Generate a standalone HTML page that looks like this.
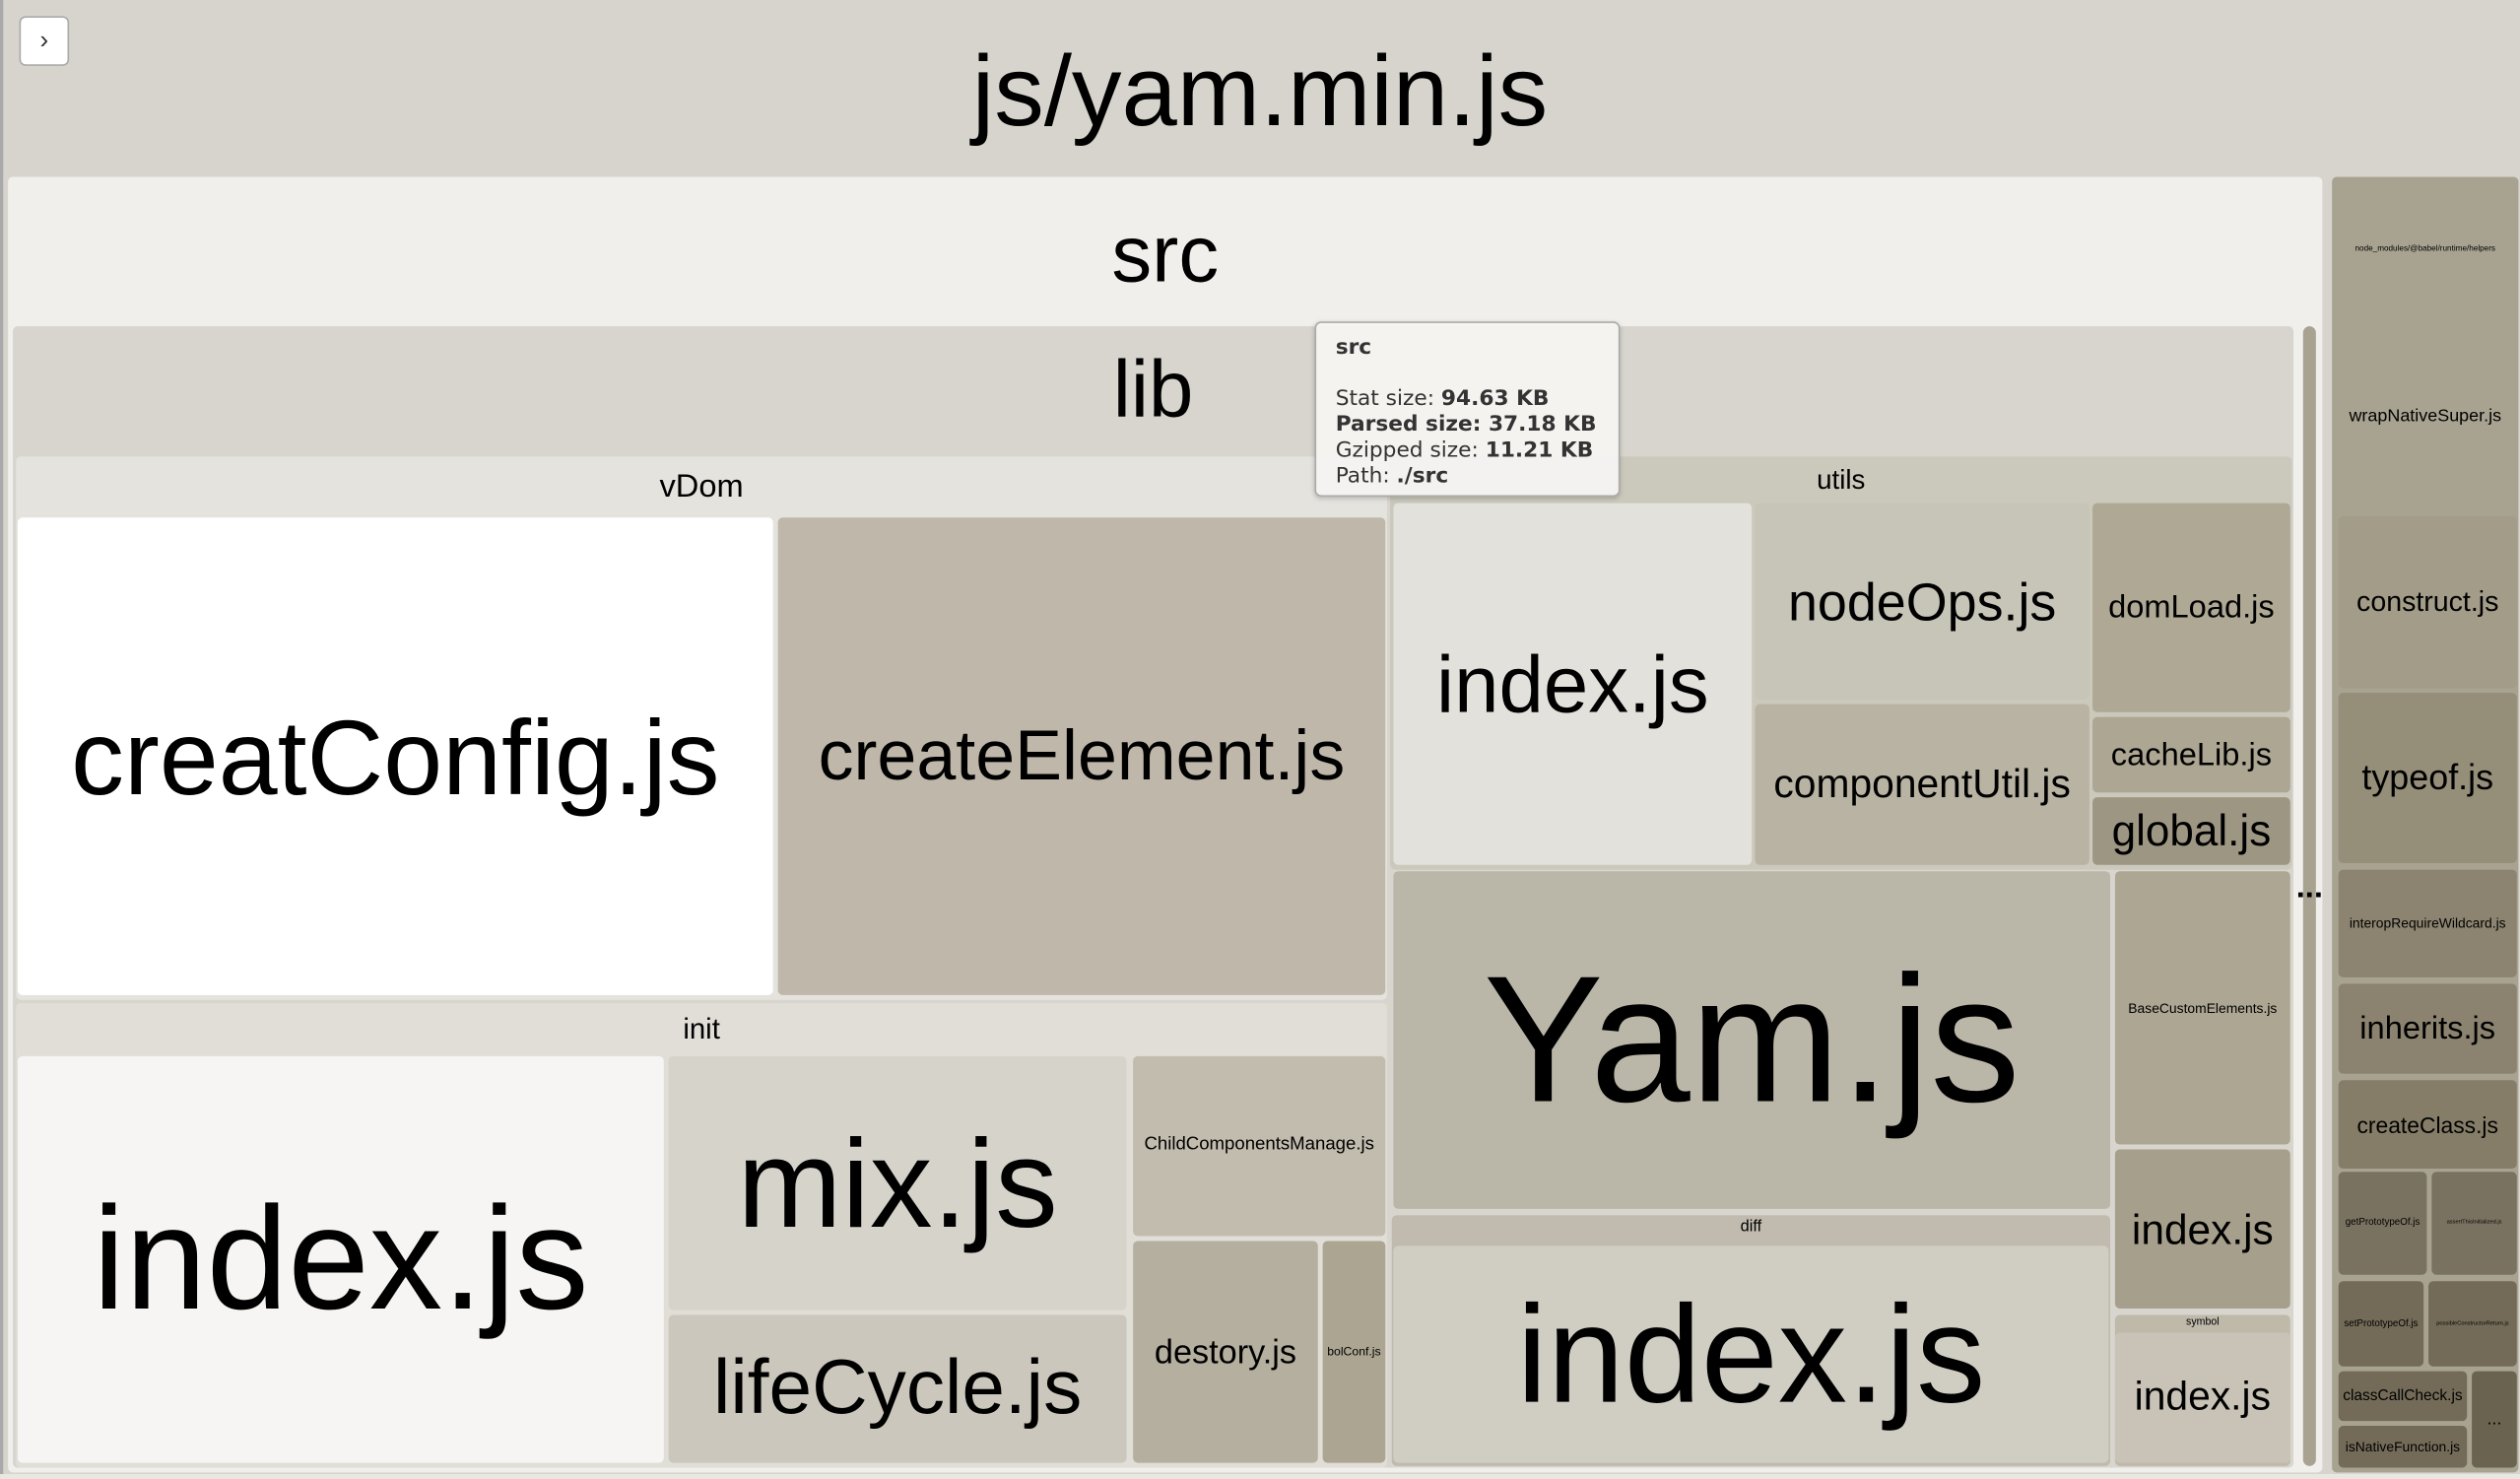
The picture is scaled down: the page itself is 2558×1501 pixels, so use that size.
<!DOCTYPE html>
<html><head><meta charset="utf-8"><style>
html,body{margin:0;padding:0;width:2558px;height:1500px;overflow:hidden;background:#e9e7e1}
#c{position:absolute;left:0;top:0;width:1568px;height:920px;transform:scale(1.6314);transform-origin:0 0;font-family:"Liberation Sans",Arial,sans-serif;color:#000}
.b{position:absolute;box-sizing:border-box;border-radius:3px;display:flex;align-items:center;justify-content:center;white-space:nowrap;overflow:hidden;line-height:1}
.l{position:absolute;left:0;right:0;text-align:center;white-space:nowrap;line-height:1}
</style></head><body><div id="c">
<div class="b" style="left:0;top:0;width:1568px;height:917px;background:#d6d4cc;border-left:2px solid #a9a9a9;border-radius:0"></div>
<div class="l" style="left:0;width:1568px;top:27px;font-size:62px">js/yam.min.js</div>
<div class="b" style="left:12px;top:10px;width:31px;height:31px;background:#fff;border:1px solid #aaa;border-radius:4px;font-size:16px;color:#333">&#8250;</div>

<div class="b" style="left:5px;top:110px;width:1440px;height:806px;background:#f0efeb"></div>
<div class="l" style="left:5px;width:1440px;top:133px;font-size:50px;right:auto">src</div>
<div class="b" style="left:8px;top:203px;width:1419px;height:710px;background:#d7d5cd"></div>
<div class="l" style="left:8px;width:1419px;top:217px;font-size:50px;right:auto">lib</div>
<div class="b" style="left:10px;top:284px;width:853px;height:338px;background:#e5e3de"></div>
<div class="l" style="left:10px;width:853px;top:293px;font-size:20px;right:auto">vDom</div>
<div class="b" style="left:11px;top:322px;width:470px;height:297px;background:#fff;font-size:66px">creatConfig.js</div>
<div class="b" style="left:484px;top:322px;width:378px;height:297px;background:#bfb8aa;font-size:44px">createElement.js</div>
<div class="b" style="left:10px;top:624px;width:853px;height:289px;background:#e0ded7"></div>
<div class="l" style="left:10px;width:853px;top:631px;font-size:18px;right:auto">init</div>
<div class="b" style="left:11px;top:657px;width:402px;height:253px;background:#f6f5f3;font-size:91px">index.js</div>
<div class="b" style="left:416px;top:657px;width:285px;height:158px;background:#d6d3cb;font-size:78px">mix.js</div>
<div class="b" style="left:416px;top:818px;width:285px;height:92px;background:#cbc7bc;font-size:48px">lifeCycle.js</div>
<div class="b" style="left:705px;top:657px;width:157px;height:112px;background:#c2bcaf;font-size:11.4px">ChildComponentsManage.js</div>
<div class="b" style="left:705px;top:772px;width:115px;height:138px;background:#b5af9f;font-size:21px">destory.js</div>
<div class="b" style="left:823px;top:772px;width:39px;height:138px;background:#aba592;font-size:7.5px">bolConf.js</div>
<div class="b" style="left:865px;top:284px;width:561px;height:257px;background:#cbc8bc"></div>
<div class="l" style="left:865px;width:561px;top:290px;font-size:17px;right:auto">utils</div>
<div class="b" style="left:867px;top:313px;width:223px;height:225px;background:#e3e1dc;font-size:50px">index.js</div>
<div class="b" style="left:1092px;top:313px;width:208px;height:122px;background:#c7c4b8;font-size:33px">nodeOps.js</div>
<div class="b" style="left:1092px;top:438px;width:208px;height:100px;background:#b9b3a3;font-size:25px">componentUtil.js</div>
<div class="b" style="left:1302px;top:313px;width:123px;height:130px;background:#aea895;font-size:20px">domLoad.js</div>
<div class="b" style="left:1302px;top:446px;width:123px;height:47px;background:#aca693;font-size:20px">cacheLib.js</div>
<div class="b" style="left:1302px;top:496px;width:123px;height:42px;background:#9d9683;font-size:27px">global.js</div>
<div class="b" style="left:867px;top:542px;width:446px;height:210px;background:#bab6a8;font-size:112px">Yam.js</div>
<div class="b" style="left:1316px;top:542px;width:109px;height:170px;background:#aca693;font-size:8.5px">BaseCustomElements.js</div>
<div class="b" style="left:1316px;top:715px;width:109px;height:99px;background:#a69f8b;font-size:26px">index.js</div>
<div class="b" style="left:866px;top:756px;width:447px;height:156px;background:#c0bbae"></div>
<div class="l" style="left:866px;width:447px;top:759px;font-size:10px;right:auto">diff</div>
<div class="b" style="left:867px;top:775px;width:445px;height:135px;background:#d0cdc3;font-size:86px">index.js</div>
<div class="b" style="left:1316px;top:818px;width:109px;height:94px;background:#bfb9aa"></div>
<div class="l" style="left:1316px;width:109px;top:820px;font-size:6.5px;right:auto">symbol</div>
<div class="b" style="left:1316px;top:829px;width:109px;height:81px;background:#c8c3b6;font-size:25px">index.js</div>
<div class="b" style="left:1433px;top:203px;width:8px;height:709px;background:#a8a291;border-radius:4px"></div>
<div class="l" style="left:1425px;width:24px;top:542px;font-size:20px;right:auto;font-weight:bold">...</div>

<div class="b" style="left:1451px;top:110px;width:116px;height:806px;background:#a8a391"></div>
<div class="l" style="left:1451px;width:116px;top:153px;font-size:5px;right:auto">node_modules/@babel/runtime/helpers</div>
<div class="b" style="left:1452px;top:200px;width:114px;height:118px;background:#a8a391;font-size:11px">wrapNativeSuper.js</div>
<div class="b" style="left:1455px;top:321px;width:111px;height:107px;background:#a29c88;font-size:17.5px">construct.js</div>
<div class="b" style="left:1455px;top:431px;width:111px;height:106px;background:#958e79;font-size:22px">typeof.js</div>
<div class="b" style="left:1455px;top:541px;width:111px;height:67px;background:#8c8470;font-size:8.5px">interopRequireWildcard.js</div>
<div class="b" style="left:1455px;top:612px;width:111px;height:56px;background:#8b8370;font-size:20px">inherits.js</div>
<div class="b" style="left:1455px;top:672px;width:111px;height:55px;background:#857d68;font-size:14px">createClass.js</div>
<div class="b" style="left:1455px;top:729px;width:55px;height:64px;background:#7a7260;font-size:6px">getPrototypeOf.js</div>
<div class="b" style="left:1513px;top:729px;width:53px;height:64px;background:#7a7260;font-size:3.5px">assertThisInitialized.js</div>
<div class="b" style="left:1455px;top:797px;width:53px;height:53px;background:#736b58;font-size:6px">setPrototypeOf.js</div>
<div class="b" style="left:1511px;top:797px;width:55px;height:53px;background:#736b58;font-size:3.5px">possibleConstructorReturn.js</div>
<div class="b" style="left:1455px;top:853px;width:80px;height:31px;background:#736b58;font-size:9.5px">classCallCheck.js</div>
<div class="b" style="left:1455px;top:887px;width:80px;height:26px;background:#736b58;font-size:8.5px">isNativeFunction.js</div>
<div class="b" style="left:1538px;top:853px;width:28px;height:60px;background:#6a6350;font-size:11px">...</div>

<div style="position:absolute;left:818px;top:200px;width:190px;height:109px;box-sizing:border-box;background:rgba(245,244,241,0.96);border:1px solid #aaa;border-radius:4px;box-shadow:0 1px 3px rgba(0,0,0,0.2);font-family:'DejaVu Sans',Verdana,sans-serif;font-size:13.3px;line-height:16px;color:#333;padding:8px 12px">
<div style="font-weight:bold">src</div><div style="height:16px"></div>
<div>Stat size: <b>94.63 KB</b></div>
<div><b>Parsed size: 37.18 KB</b></div>
<div>Gzipped size: <b>11.21 KB</b></div>
<div>Path: <b>./src</b></div>
</div>
</div></body></html>
